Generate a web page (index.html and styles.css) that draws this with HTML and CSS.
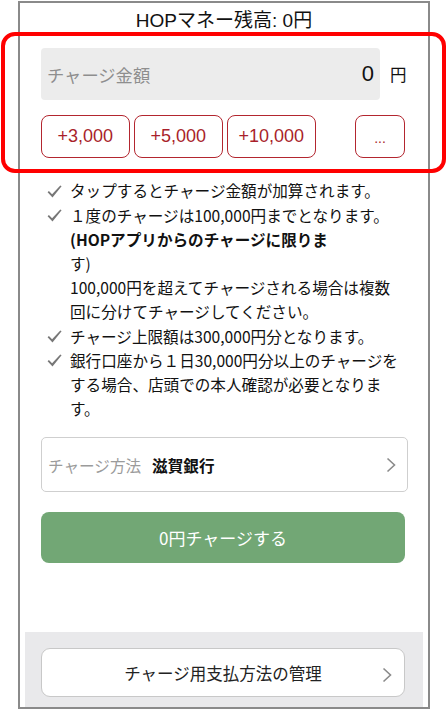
FILE: index.html
```html
<!DOCTYPE html>
<html lang="ja">
<head>
<meta charset="utf-8">
<title>HOPマネー チャージ</title>
<link rel="stylesheet" href="styles.css">
</head>
<body>
<div class="frame">
  <div class="content">
    <h1 class="balance">HOPマネー残高: 0円</h1>
    <div class="amount-row">
      <div class="amount-box">
        <span class="placeholder">チャージ金額</span>
        <span class="amount-value">0</span>
      </div>
      <span class="yen">円</span>
    </div>
    <div class="quick">
      <button class="quick-btn">+3,000</button>
      <button class="quick-btn">+5,000</button>
      <button class="quick-btn">+10,000</button>
      <button class="quick-btn more">...</button>
    </div>
    <ul class="notes">
      <li><span class="check"><svg width="15" height="13" viewBox="0 0 15 13"><path d="M0.6 7.2 L1.9 6.1 L5.1 9.2 L13.3 0.4 L14.6 1.3 L5.5 12.4 Z" fill="#777"/></svg></span><span class="note-text">タップするとチャージ金額が加算されます。</span></li>
      <li><span class="check"><svg width="15" height="13" viewBox="0 0 15 13"><path d="M0.6 7.2 L1.9 6.1 L5.1 9.2 L13.3 0.4 L14.6 1.3 L5.5 12.4 Z" fill="#777"/></svg></span><span class="note-text">１度のチャージは100,000円までとなります。<br><b>(HOPアプリからのチャージに限りま</b><br>す)<br>100,000円を超えてチャージされる場合は複数<br>回に分けてチャージしてください。</span></li>
      <li><span class="check"><svg width="15" height="13" viewBox="0 0 15 13"><path d="M0.6 7.2 L1.9 6.1 L5.1 9.2 L13.3 0.4 L14.6 1.3 L5.5 12.4 Z" fill="#777"/></svg></span><span class="note-text">チャージ上限額は300,000円分となります。</span></li>
      <li><span class="check"><svg width="15" height="13" viewBox="0 0 15 13"><path d="M0.6 7.2 L1.9 6.1 L5.1 9.2 L13.3 0.4 L14.6 1.3 L5.5 12.4 Z" fill="#777"/></svg></span><span class="note-text">銀行口座から１日30,000円分以上のチャージを<br>する場合、店頭での本人確認が必要となりま<br>す。</span></li>
    </ul>
    <div class="method">
      <span class="method-label">チャージ方法</span>
      <span class="method-bank">滋賀銀行</span>
      <svg class="chevron" width="10" height="16" viewBox="0 0 10 16"><polyline points="1.5,1.5 8.5,8 1.5,14.5" fill="none" stroke="#8a8a8a" stroke-width="1.6"/></svg>
    </div>
    <button class="charge">0円チャージする</button>
  </div>
  <div class="footer">
    <button class="manage">
      <span></span>
      <span class="manage-text">チャージ用支払方法の管理</span>
      <svg class="chevron manage-chevron" width="10" height="16" viewBox="0 0 10 16"><polyline points="1.5,1.5 8.5,8 1.5,14.5" fill="none" stroke="#8a8a8a" stroke-width="1.6"/></svg>
    </button>
  </div>
</div>
<div class="highlight"></div>
</body>
</html>
```
FILE: styles.css
```css
* { box-sizing: border-box; }
html, body { margin: 0; padding: 0; background: #fff; }
body {
  font-family: "Noto Sans CJK JP", "Noto Sans", sans-serif;
  color: #111;
  width: 447px;
  height: 710px;
  position: relative;
  overflow: hidden;
}
.frame {
  margin: 1px 0 0 18px;
  width: 412px;
  height: 708px;
  border: 2px solid #8a8a8a;
  display: flex;
  flex-direction: column;
  background: #fff;
}
.content {
  margin: 0 5px;
  padding-left: 16px;
}
.balance {
  margin: 0;
  height: 36px;
  line-height: 36px;
  font-family: "Liberation Sans", "Noto Sans CJK JP", sans-serif;
  font-size: 19px;
  font-weight: normal;
  text-align: center;
  margin-left: -16px;
  color: #111;
}
.amount-row {
  margin-top: 9px;
  display: flex;
  align-items: center;
}
.amount-box {
  width: 339px;
  height: 52px;
  background: #ececec;
  border-radius: 4px;
  display: flex;
  align-items: center;
  padding: 0 6px 0 6px;
}
.placeholder {
  color: #8e8e8e;
  font-size: 17.3px;
}
.amount-value {
  margin-left: auto;
  font-family: "Liberation Sans", sans-serif;
  font-size: 22px;
  color: #111;
}
.yen {
  margin-left: 10px;
  font-size: 16.5px;
  color: #111;
}
.quick {
  margin-top: 15px;
  width: 364px;
  display: flex;
  gap: 4.5px;
}
.quick-btn {
  width: 88.5px;
  height: 43px;
  border: 1.5px solid #b3262f;
  border-radius: 8px;
  background: #fff;
  color: #a91f2b;
  font-family: "Liberation Sans", sans-serif;
  font-size: 18px;
  padding: 0;
}
.quick-btn.more {
  width: 50px;
  margin-left: auto;
  font-size: 14px;
  padding-top: 3px;
}
.notes {
  list-style: none;
  margin: 20.4px 0 0 0;
  padding: 0 0 0 6px;
  font-size: 15.6px;
  line-height: 24.2px;
  color: #111;
}
.notes li {
  display: flex;
}
.check {
  flex: 0 0 23px;
  display: flex;
  align-items: flex-start;
  padding-top: 6.5px;
}
.check svg {
  display: block;
}
.note-text {
  white-space: nowrap;
}
.note-text b {
  font-weight: bold;
}
.method {
  margin-top: 16.6px;
  width: 367px;
  height: 55px;
  border: 1px solid #cfcfcf;
  border-radius: 5px;
  display: flex;
  align-items: center;
  padding: 0 11px 0 6px;
  font-size: 15.6px;
}
.method-label {
  color: #9b9b9b;
}
.method-bank {
  margin-left: 11px;
  font-weight: bold;
  color: #111;
}
.chevron {
  display: block;
}
.method .chevron {
  margin-left: auto;
}
.charge {
  display: block;
  margin-top: 20px;
  width: 364px;
  height: 51px;
  border: none;
  border-radius: 8px;
  background: #72a775;
  color: #fff;
  font-family: "Noto Sans CJK JP", sans-serif;
  font-size: 17px;
  padding: 0;
}
.footer {
  margin: auto 5px 0 5px;
  background: #e9e9eb;
  padding: 16px 18px 10px 16px;
}
.manage {
  width: 364px;
  height: 49px;
  border: 1px solid #c8c8c8;
  border-radius: 9px;
  background: #fff;
  display: grid;
  grid-template-columns: 1fr auto 1fr;
  align-items: center;
  padding: 0 12px 0 12px;
  font-family: "Noto Sans CJK JP", sans-serif;
  font-size: 16.5px;
  color: #222;
}
.manage-chevron {
  justify-self: end;
  margin-top: 4px;
}
.highlight {
  position: absolute;
  left: 1px;
  top: 32px;
  width: 445px;
  height: 141px;
  border: 4px solid #ff0000;
  border-radius: 14px;
  pointer-events: none;
}
```
